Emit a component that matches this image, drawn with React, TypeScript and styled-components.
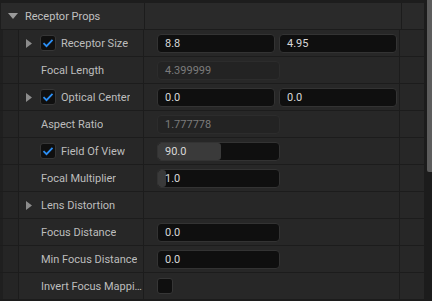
import * as React from 'react'
import styled, { createGlobalStyle } from 'styled-components'

const GlobalStyle = createGlobalStyle`
  html, body {
    margin: 0;
    padding: 0;
    background: #1c1c1c;
  }
  body {
    font-family: Roboto, 'Liberation Sans', sans-serif;
    font-size: 11px;
  }
`

const Panel = styled.div`
  width: 432px;
  height: 301px;
  display: flex;
  overflow: hidden;
  background: #1c1c1c;
`

const Content = styled.div`
  flex: 1;
  display: flex;
  flex-direction: column;
`

const TopGap = styled.div`
  height: 3px;
  flex: 0 0 3px;
  background: #1d1d1d;
`

const Scrollbar = styled.div`
  width: 8px;
  flex: 0 0 8px;
  background: #1c1c1c;
  display: flex;
  justify-content: flex-end;
`

const Thumb = styled.div`
  width: 5px;
  height: 172px;
  background: #5c5c5c;
  border-bottom-left-radius: 2px;
`

const HeaderRow = styled.div`
  display: flex;
  height: 26px;
  border-bottom: 1px solid #1c1c1c;
  background: #2a2a2a;
  border-left: 1px solid #1d1d1d;
`

const HeaderName = styled.div`
  width: 143px;
  border-right: 1px solid #1c1c1c;
  display: flex;
  align-items: center;
  color: #c0c0c0;
`

const HeaderArrow = styled.span`
  width: 24px;
  display: flex;
  padding-left: 7px;
  box-sizing: border-box;
`

const HeaderValue = styled.div`
  width: 256px;
  border-right: 1px solid #1c1c1c;
`

const Row = styled.div`
  display: flex;
  height: 26px;
  border-bottom: 1px solid #1c1c1c;
`

const Gutter = styled.div`
  width: 3px;
  background: #1f1f1f;
`

const Indent = styled.div`
  width: 15px;
  background: #252525;
  border-right: 1px solid #1c1c1c;
`

const NameCell = styled.div`
  width: 125px;
  background: #272727;
  border-right: 1px solid #1c1c1c;
  display: flex;
  align-items: center;
  padding-left: 7px;
  box-sizing: border-box;
  overflow: hidden;
`

const ValueCell = styled.div`
  width: 256px;
  background: #272727;
  border-right: 1px solid #1c1c1c;
  display: flex;
  align-items: center;
  gap: 4px;
  padding-left: 13px;
  box-sizing: border-box;
`

const Extra = styled.div`
  flex: 1;
  background: #272727;
`

const Slot = styled.div`
  width: 6px;
  margin-right: 8px;
  flex: 0 0 6px;
  display: flex;
  align-items: center;
`

const Label = styled.span<{ $plain?: boolean }>`
  color: #bdbdbd;
  white-space: nowrap;
  overflow: hidden;
  text-overflow: ellipsis;
  margin-left: ${({ $plain }) => ($plain ? '1px' : '5px')};
`

const Box = styled.div`
  width: 16px;
  height: 16px;
  flex: 0 0 16px;
  box-sizing: border-box;
  background: #0f0f0f;
  border: 1px solid #363636;
  border-radius: 3px;
  display: flex;
  align-items: center;
  justify-content: center;
`

const Input = styled.div<{ $w: number; $readOnly?: boolean }>`
  position: relative;
  width: ${({ $w }) => $w}px;
  height: 19px;
  box-sizing: border-box;
  border-radius: 4px;
  border: 1px solid ${({ $readOnly }) => ($readOnly ? '#2c2c2c' : '#333333')};
  background: ${({ $readOnly }) => ($readOnly ? '#232323' : '#0f0f0f')};
  color: ${({ $readOnly }) => ($readOnly ? '#7c7c7c' : '#d8d8d8')};
  display: flex;
  align-items: center;
  padding-left: 7px;
  overflow: hidden;
`

const Fill = styled.div`
  position: absolute;
  left: 0;
  top: 0;
  bottom: 0;
  background: #3a3a3a;
  border-radius: 3px;
`

const Value = styled.span`
  position: relative;
`

const Check = () => (
  <svg width="12" height="12" viewBox="0 0 12 12">
    <path d="M1.5 6.2 L4.5 9.2 L10.5 2.8" fill="none" stroke="#2c8ff5" strokeWidth="1.8" />
  </svg>
)

const Arrow = ({ down }: { down?: boolean }) =>
  down ? (
    <svg width="10" height="6" viewBox="0 0 10 6">
      <path d="M0 0 L10 0 L5 6 Z" fill="#9a9a9a" />
    </svg>
  ) : (
    <svg width="6" height="9" viewBox="0 0 6 9">
      <path d="M0 0 L6 4.5 L0 9 Z" fill="#8c8c8c" />
    </svg>
  )

type Field = {
  text: string
  w?: number
  readOnly?: boolean
  fill?: number
  check?: boolean
}

type Prop = {
  name: string
  expander?: boolean
  checkbox?: boolean
  fields: Field[]
}

const props: Prop[] = [
  { name: 'Receptor Size', expander: true, checkbox: true, fields: [{ text: '8.8' }, { text: '4.95' }] },
  { name: 'Focal Length', fields: [{ text: '4.399999', w: 123, readOnly: true }] },
  { name: 'Optical Center', expander: true, checkbox: true, fields: [{ text: '0.0' }, { text: '0.0' }] },
  { name: 'Aspect Ratio', fields: [{ text: '1.777778', w: 123, readOnly: true }] },
  { name: 'Field Of View', checkbox: true, fields: [{ text: '90.0', w: 123, fill: (90 - 5) / (170 - 5) }] },
  { name: 'Focal Multiplier', fields: [{ text: '1.0', w: 123, fill: 0.07 }] },
  { name: 'Lens Distortion', expander: true, fields: [] },
  { name: 'Focus Distance', fields: [{ text: '0.0', w: 123 }] },
  { name: 'Min Focus Distance', fields: [{ text: '0.0', w: 123 }] },
  { name: 'Invert Focus Mapping', fields: [{ text: '', check: true }] },
]

const PropRow = ({ name, expander, checkbox, fields }: Prop) => (
  <Row>
    <Gutter />
    <Indent />
    <NameCell>
      <Slot>{expander && <Arrow />}</Slot>
      {checkbox && (
        <Box>
          <Check />
        </Box>
      )}
      <Label $plain={!checkbox}>{name}</Label>
    </NameCell>
    <ValueCell>
      {fields.map((f, i) =>
        f.check ? (
          <Box key={i} />
        ) : (
          <Input key={i} $w={f.w ?? 118} $readOnly={f.readOnly}>
            {f.fill !== undefined && <Fill style={{ width: `${Math.round(f.fill * 100)}%` }} />}
            <Value>{f.text}</Value>
          </Input>
        )
      )}
    </ValueCell>
    <Extra />
  </Row>
)

export default function App() {
  return (
    <>
      <GlobalStyle />
      <Panel>
        <Content>
          <TopGap />
          <HeaderRow>
            <HeaderName>
              <HeaderArrow>
                <Arrow down />
              </HeaderArrow>
              Receptor Props
            </HeaderName>
            <HeaderValue />
          </HeaderRow>
          {props.map(p => (
            <PropRow key={p.name} {...p} />
          ))}
        </Content>
        <Scrollbar>
          <Thumb />
        </Scrollbar>
      </Panel>
    </>
  )
}
